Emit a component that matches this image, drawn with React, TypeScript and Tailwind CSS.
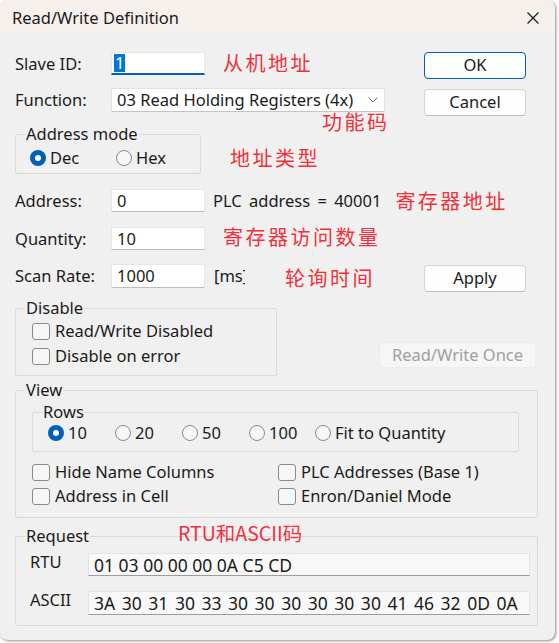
import type { ReactNode } from 'react'

function Radio({ label, checked = false, className = '' }: { label: string; checked?: boolean; className?: string }) {
  return (
    <label className={`flex h-[20px] items-center gap-[4px] leading-[20px] ${className}`}>
      {checked ? (
        <span className="flex h-[16px] w-[16px] items-center justify-center rounded-full bg-[#005fb8]">
          <span className="h-[6px] w-[6px] rounded-full bg-white" />
        </span>
      ) : (
        <span className="h-[16px] w-[16px] rounded-full border border-[#8a8a8a] bg-[#f7f7f7]" />
      )}
      <span>{label}</span>
    </label>
  )
}

function Check({ label }: { label: string }) {
  return (
    <label className="flex h-[20px] items-center gap-[5px] leading-[20px]">
      <span className="h-[17px] w-[18px] rounded-[3px] border border-[#8a8a8a] bg-[#f7f7f7]" />
      <span>{label}</span>
    </label>
  )
}

function Group({ title, className = '', children }: { title: string; className?: string; children: ReactNode }) {
  return (
    <fieldset className={`relative rounded-[2px] border border-[#dadada] ${className}`}>
      <legend className="ml-[9px] px-[1px] leading-[20px]">{title}</legend>
      {children}
    </fieldset>
  )
}

function Note({ children, className = '' }: { children: ReactNode; className?: string }) {
  return (
    <span className={`font-['Noto_Sans_CJK_SC',sans-serif] leading-[22px] text-[#f0303a] ${className}`}>
      {children}
    </span>
  )
}

function Input({ value, className = '' }: { value: string; className?: string }) {
  return (
    <div className={`flex h-[23px] w-[94px] items-center border border-[#e6e6e6] border-b-[#bdbdbd] bg-white px-[5px] ${className}`}>
      {value}
    </div>
  )
}

function Button({ label, primary = false, className = '' }: { label: string; primary?: boolean; className?: string }) {
  return (
    <button
      className={`h-[27px] w-[102px] rounded-[4px] border bg-[#fdfdfd] leading-none ${primary ? 'border-[#005fb8]' : 'border-[#d4d4d4] border-b-[#bcbcbc]'} ${className}`}
    >
      {label}
    </button>
  )
}

const noteText = 'text-[20px] tracking-[2.5px]'

export default function App() {
  return (
    <div className="h-[643px] w-[559px] bg-white font-['Noto_Sans','Noto_Sans_CJK_SC',sans-serif] text-[16.5px] leading-[22px] text-[#1b1b1b]">
      <div className="h-[640px] w-[555px] overflow-hidden rounded-[8px] bg-[#f0f0f0] shadow-[1px_1px_3px_rgba(0,0,0,0.45)]">
        {/* title bar */}
        <div className="flex h-[36px] items-center justify-between bg-[#f6f0ed] pl-[12px] pr-[15px]">
          <span className="text-[16.5px]">Read/Write Definition</span>
          <svg width="14" height="14" viewBox="0 0 14 14">
            <path d="M1.5 1.5 L12.5 12.5 M12.5 1.5 L1.5 12.5" stroke="#1b1b1b" strokeWidth="1.2" />
          </svg>
        </div>

        <div className="relative pl-[15px] pt-[16px]">
          {/* slave id */}
          <div className="flex items-start">
            <span className="w-[96px] leading-[23px]">Slave ID:</span>
            <div className="flex h-[23px] w-[94px] items-center border border-[#e6e6e6] border-b-2 border-b-[#005fb8] bg-white px-[2px]">
              <span className="bg-[#0078d7] px-[1px] leading-[18px] text-white">1</span>
            </div>
            <Note className={`ml-[18px] ${noteText}`}>从机地址</Note>
            <Button label="OK" primary className="ml-auto mr-[29px]" />
          </div>

          {/* function */}
          <div className="mt-[9px] flex items-start">
            <span className="w-[96px] leading-[24px]">Function:</span>
            <div className="flex h-[24px] w-[274px] items-center justify-between border border-[#e0e0e0] border-b-[#c4c4c4] bg-white pl-[5px] pr-[6px]">
              <span>03 Read Holding Registers (4x)</span>
              <svg width="10" height="6" viewBox="0 0 10 6">
                <path d="M0.5 0.5 L5 5 L9.5 0.5" stroke="#6b6b6b" strokeWidth="1" fill="none" />
              </svg>
            </div>
            <Button label="Cancel" className="ml-auto mr-[29px] mt-[1px]" />
          </div>

          <Note className={`absolute left-[322px] top-[75px] ${noteText}`}>功能码</Note>

          {/* address mode */}
          <div className="mt-[8px] flex items-start">
            <Group title="Address mode" className="w-[186px] pb-[5px]">
              <div className="mt-[4px] flex pl-[14px]">
                <Radio label="Dec" checked className="w-[86px]" />
                <Radio label="Hex" />
              </div>
            </Group>
            <Note className={`ml-[29px] mt-[23px] ${noteText}`}>地址类型</Note>
          </div>

          {/* address */}
          <div className="mt-[15px] flex items-center">
            <span className="w-[96px]">Address:</span>
            <Input value="0" />
            <span className="ml-[8px] [word-spacing:3px]">PLC address = 40001</span>
            <Note className={`ml-[14px] ${noteText}`}>寄存器地址</Note>
          </div>

          {/* quantity */}
          <div className="mt-[15px] flex items-center">
            <span className="w-[96px]">Quantity:</span>
            <Input value="10" />
            <Note className={`ml-[18px] -mt-[4px] ${noteText}`}>寄存器访问数量</Note>
          </div>

          {/* scan rate */}
          <div className="mt-[14px] flex items-start">
            <span className="w-[96px] leading-[24px]">Scan Rate:</span>
            <Input value="1000" className="h-[24px]" />
            <span className="ml-[9px] w-[31px] overflow-hidden whitespace-nowrap leading-[24px]">[ms]</span>
            <Note className={`ml-[40px] mt-[3px] ${noteText}`}>轮询时间</Note>
            <Button label="Apply" className="ml-auto mr-[29px] mt-[1px]" />
          </div>

          {/* disable */}
          <div className="mt-[6px] flex items-start">
            <Group title="Disable" className="w-[262px] pb-[9px]">
              <div className="mt-[3px] flex flex-col gap-[5px] pl-[16px]">
                <Check label="Read/Write Disabled" />
                <Check label="Disable on error" />
              </div>
            </Group>
            <button className="ml-auto mr-[19px] mt-[44px] h-[26px] w-[157px] rounded-[4px] border border-[#ececec] bg-[#f6f6f6] leading-none text-[#a0a0a0]">
              Read/Write Once
            </button>
          </div>

          {/* view */}
          <Group title="View" className="mt-[4px] w-[523px] pb-[11px]">
            <Group title="Rows" className="ml-[16px] mt-[2px] w-[487px] pb-[8px]">
              <div className="mt-[1px] flex pl-[15px]">
                <Radio label="10" checked className="w-[67px]" />
                <Radio label="20" className="w-[67px]" />
                <Radio label="50" className="w-[67px]" />
                <Radio label="100" className="w-[66px]" />
                <Radio label="Fit to Quantity" />
              </div>
            </Group>
            <div className="ml-[16px] mt-[10px] grid grid-cols-[246px_1fr] gap-y-[4px]">
              <Check label="Hide Name Columns" />
              <Check label="PLC Addresses (Base 1)" />
              <Check label="Address in Cell" />
              <Check label="Enron/Daniel Mode" />
            </div>
          </Group>

          {/* request */}
          <Group title="Request" className="mt-[8px] w-[523px] pb-[10px]">
            <Note className="absolute -top-[24px] left-[162px] text-[19.5px]">RTU和ASCII码</Note>
            <div className="mt-[7px] flex items-start">
              <span className="w-[72px] pl-[14px] leading-[18px]">RTU</span>
              <div className="flex h-[23px] w-[442px] items-center border border-[#e4e4e4] border-b-[#9c9c9c] bg-[#f8f8f8] pl-[5px] text-[17.5px]">
                01 03 00 00 00 0A C5 CD
              </div>
            </div>
            <div className="mt-[15px] flex items-start">
              <span className="w-[72px] pl-[14px] leading-[18px]">ASCII</span>
              <div className="flex h-[24px] w-[442px] items-center border border-[#e4e4e4] border-b-[#9c9c9c] bg-[#f8f8f8] pl-[5px] text-[17.5px] [word-spacing:2px]">
                3A 30 31 30 33 30 30 30 30 30 30 41 46 32 0D 0A
              </div>
            </div>
          </Group>
        </div>
      </div>
    </div>
  )
}
